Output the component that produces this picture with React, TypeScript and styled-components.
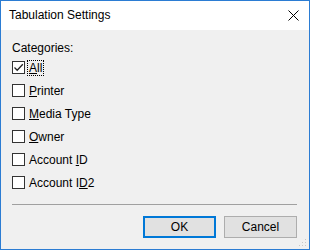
import React from "react";
import styled, { createGlobalStyle } from "styled-components";

const Global = createGlobalStyle`
  html, body { margin: 0; padding: 0; background: #ffffff; }
  body { font-family: "Liberation Sans", Arial, sans-serif; }
`;

const Window = styled.div`
  box-sizing: border-box;
  width: 310px;
  height: 250px;
  border: 1px solid #2b7cd3;
  display: flex;
  flex-direction: column;
  background: #f0f0f0;
  position: relative;
  font-family: "Liberation Sans", Arial, sans-serif;
  font-size: 12px;
  color: #000;
`;

const TitleBar = styled.div`
  height: 29px;
  background: #ffffff;
  display: flex;
  align-items: center;
  justify-content: space-between;
  padding: 0 0 0 8px;
  flex-shrink: 0;
`;

const Title = styled.span`
  font-size: 12px;
  line-height: 15px;
`;

const CloseButton = styled.div`
  width: 31px;
  height: 29px;
  display: flex;
  align-items: center;
  justify-content: center;
  box-sizing: border-box;
`;

const Body = styled.div`
  flex: 1;
  display: flex;
  flex-direction: column;
  padding: 11px 12px 11px 11px;
`;

const GroupLabel = styled.div`
  line-height: 15px;
`;

const List = styled.div`
  display: flex;
  flex-direction: column;
`;

const Row = styled.label`
  height: 23px;
  display: flex;
  align-items: center;
  gap: 1px;
`;

const Box = styled.span`
  box-sizing: border-box;
  width: 13px;
  height: 13px;
  border: 1px solid #333333;
  background: #ffffff;
  display: flex;
  align-items: center;
  justify-content: center;
  flex-shrink: 0;
  margin-right: 1px;
`;

const LabelText = styled.span<{ $focused?: boolean }>`
  line-height: 14px;
  padding: 0 1px;
  border: 1px dotted ${(p) => (p.$focused ? "#000" : "transparent")};
  u { text-decoration: underline; text-underline-offset: 1px; }
`;

const Spacer = styled.div`
  flex: 1;
`;

const Separator = styled.div`
  height: 1px;
  background: #a0a0a0;
  margin-bottom: 11px;
`;

const ButtonRow = styled.div`
  display: flex;
  justify-content: flex-end;
  gap: 8px;
`;

const Button = styled.button<{ $default?: boolean }>`
  box-sizing: border-box;
  width: 73px;
  height: 22px;
  background: #e1e1e1;
  border: ${(p) => (p.$default ? "2px solid #0078d7" : "1px solid #adadad")};
  font-family: "Liberation Sans", Arial, sans-serif;
  font-size: 12px;
  color: #000;
  padding: 0;
  margin: 0;
`;

const Grip = styled.svg`
  position: absolute;
  right: 2px;
  bottom: 2px;
`;

const items: { pre: string; key: string; post: string; checked?: boolean }[] = [
  { pre: "", key: "A", post: "ll", checked: true },
  { pre: "", key: "P", post: "rinter" },
  { pre: "", key: "M", post: "edia Type" },
  { pre: "", key: "O", post: "wner" },
  { pre: "Account ", key: "I", post: "D" },
  { pre: "Account I", key: "D", post: "2" },
];

export default function App() {
  return (
    <>
      <Global />
      <Window>
        <TitleBar>
          <Title>Tabulation Settings</Title>
          <CloseButton>
            <svg width="11" height="11" viewBox="0 0 11 11">
              <path d="M0.5 0.5 L10.5 10.5 M10.5 0.5 L0.5 10.5" stroke="#000" strokeWidth="1" fill="none" />
            </svg>
          </CloseButton>
        </TitleBar>
        <Body>
          <GroupLabel>Categories:</GroupLabel>
          <List>
            {items.map((it, i) => (
              <Row key={i}>
                <Box>
                  {it.checked && (
                    <svg width="11" height="11" viewBox="0 0 11 11">
                      <path d="M1.5 5.5 L4.2 8.2 L9.8 2.2" stroke="#222" strokeWidth="1.3" fill="none" />
                    </svg>
                  )}
                </Box>
                <LabelText $focused={it.checked}>
                  {it.pre}
                  <u>{it.key}</u>
                  {it.post}
                </LabelText>
              </Row>
            ))}
          </List>
          <Spacer />
          <Separator />
          <ButtonRow>
            <Button $default>OK</Button>
            <Button>Cancel</Button>
          </ButtonRow>
        </Body>
        <Grip width="10" height="10" viewBox="0 0 10 10">
          {[
            [8, 2],
            [8, 5],
            [5, 5],
            [8, 8],
            [5, 8],
            [2, 8],
          ].map(([x, y], i) => (
            <rect key={i} x={x} y={y} width="1" height="1" fill="#c8c8c8" />
          ))}
        </Grip>
      </Window>
    </>
  );
}
